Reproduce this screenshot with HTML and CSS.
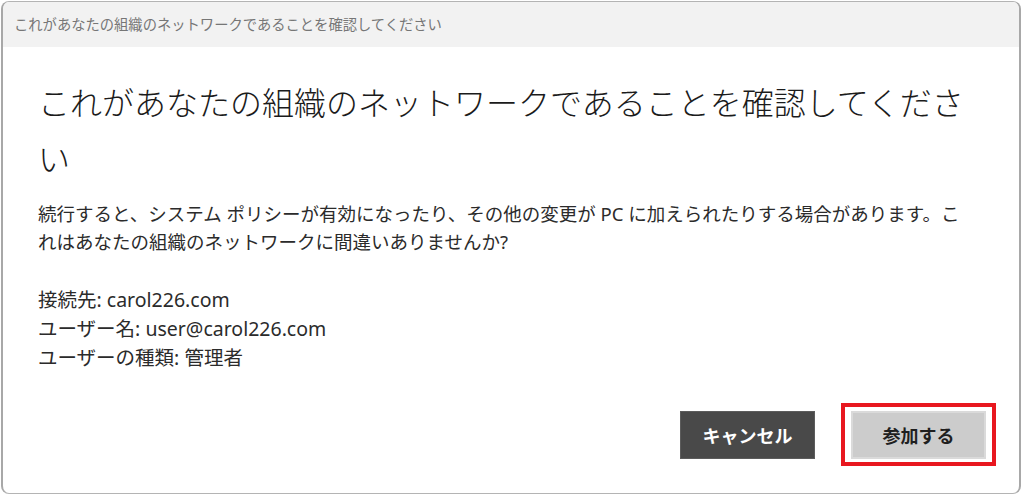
FILE: index.html
```html
<!DOCTYPE html>
<html lang="ja">
<head>
<meta charset="utf-8">
<title>これがあなたの組織のネットワークであることを確認してください</title>
<link rel="stylesheet" href="styles.css">
</head>
<body>
<div class="window">
  <div class="titlebar">これがあなたの組織のネットワークであることを確認してください</div>
  <div class="content">
    <h1 class="heading">これがあなたの組織のネットワークであることを確認してください</h1>
    <p class="desc">続行すると、システム ポリシーが有効になったり、その他の変更が PC に加えられたりする場合があります。これはあなたの組織のネットワークに間違いありませんか?</p>
    <div class="info">
      <div>接続先: carol226.com</div>
      <div>ユーザー名: user@carol226.com</div>
      <div>ユーザーの種類: 管理者</div>
    </div>
  </div>
  <div class="actions">
    <button class="btn btn-cancel">キャンセル</button>
    <span class="highlight"><button class="btn btn-join">参加する</button></span>
  </div>
</div>
</body>
</html>
```

FILE: styles.css
```css
* { box-sizing: border-box; }
html, body { margin: 0; padding: 0; background: #ffffff; }
body {
  width: 1023px;
  height: 495px;
  overflow: hidden;
  font-family: "Noto Sans", "Noto Sans CJK JP", sans-serif;
}
.window {
  margin: 1px 2px 1px 1px;
  height: 493px;
  border: 1px solid #b4b4b4;
  border-left: 2px solid #a8a8a8;
  border-right: 2px solid #a8a8a8;
  border-radius: 8px;
  overflow: hidden;
  background: #ffffff;
  display: flex;
  flex-direction: column;
}
.titlebar {
  height: 45px;
  flex: none;
  background: #f2f2f2;
  color: #767676;
  font-size: 14.3px;
  line-height: 45px;
  padding-left: 11px;
  white-space: nowrap;
}
.content {
  padding: 28px 46px 0 35px;
}
.heading {
  margin: 0;
  font-size: 32px;
  font-weight: 300;
  line-height: 56px;
  color: #1b1b1b;
}
.desc {
  margin: 13px 0 0;
  font-size: 18.5px;
  line-height: 28px;
  color: #2b2b2b;
}
.info {
  margin-top: 29px;
  font-size: 19.5px;
  line-height: 29px;
  color: #2b2b2b;
}
.actions {
  margin-top: auto;
  display: flex;
  justify-content: flex-end;
  gap: 36px;
  padding: 0 33px 34px 0;
}
.btn {
  width: 135px;
  height: 48px;
  font-family: "Noto Sans", "Noto Sans CJK JP", sans-serif;
  font-size: 18px;
  font-weight: 700;
  border-radius: 0;
  padding: 0;
  cursor: pointer;
}
.btn-cancel {
  background: #494949;
  color: #ffffff;
  border: 1px solid #5c5c5c;
}
.btn-join {
  background: #cccccc;
  color: #1f1f1f;
  border: 2px solid #dadada;
}
.highlight {
  position: relative;
  display: block;
}
.highlight::after {
  content: "";
  position: absolute;
  top: -8px;
  bottom: -7px;
  left: -10px;
  right: -10px;
  border: 4px solid #e8171f;
  pointer-events: none;
}
```
